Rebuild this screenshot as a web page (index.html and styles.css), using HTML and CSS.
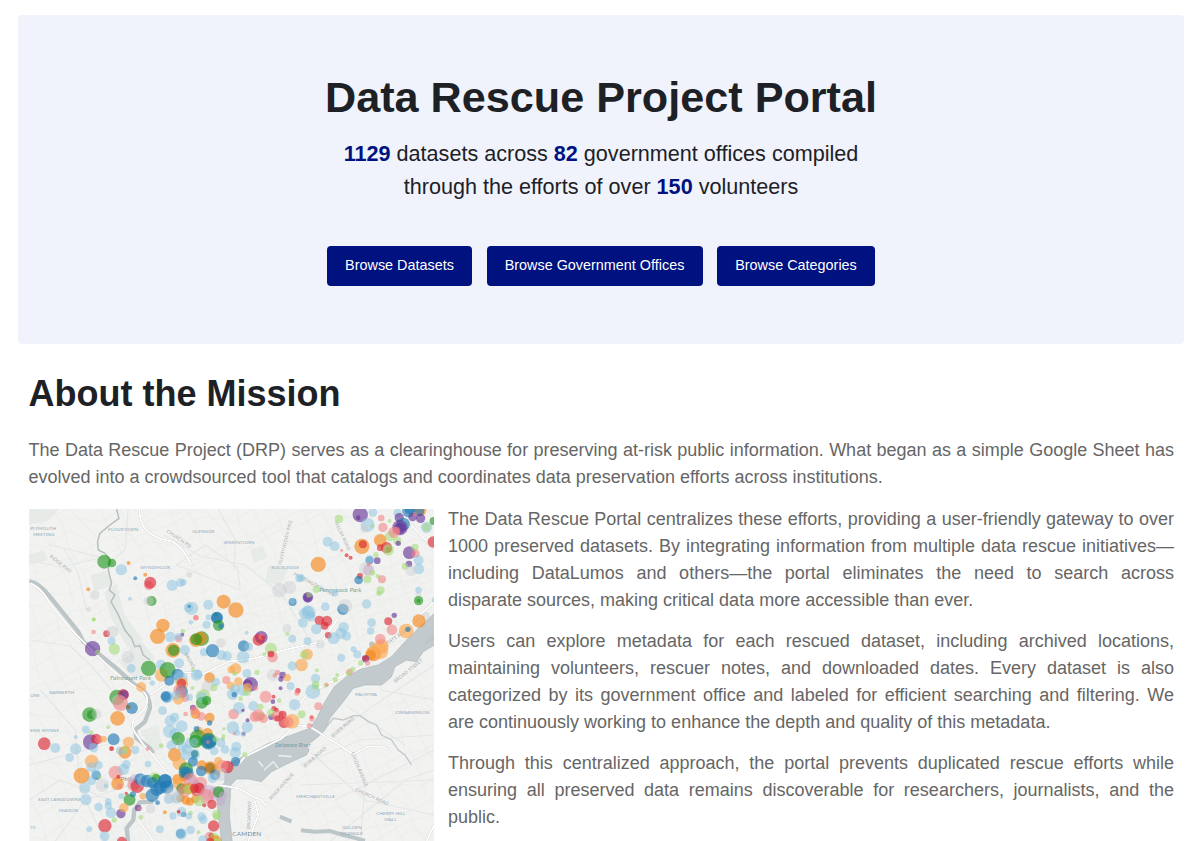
FILE: index.html
```html
<!DOCTYPE html>
<html lang="en">
<head>
<meta charset="utf-8">
<title>Data Rescue Project Portal</title>
<link rel="stylesheet" href="styles.css">
</head>
<body>
<header class="hero">
  <h1 class="hero-title">Data Rescue Project Portal</h1>
  <p class="hero-lead"><strong>1129</strong> datasets across <strong>82</strong> government offices compiled<br>through the efforts of over <strong>150</strong> volunteers</p>
  <nav class="actions">
    <a class="button datasets">Browse Datasets</a>
    <a class="button offices">Browse Government Offices</a>
    <a class="button categories">Browse Categories</a>
  </nav>
</header>
<main class="mission">
  <h2 class="mission-title">About the Mission</h2>
  <p class="copy">The Data Rescue Project (DRP) serves as a clearinghouse for preserving at-risk public information. What began as a simple Google Sheet has evolved into a crowdsourced tool that catalogs and coordinates data preservation efforts across institutions.</p>
  <div class="columns">
    <svg class="map" viewBox="29 509 405 332" role="img" aria-label="Map of the Philadelphia area">
      <defs>
        <pattern id="streets" width="61" height="53" patternUnits="userSpaceOnUse" patternTransform="rotate(-24)">
          <path d="M0 5L20 9 61 5M0 19L37 15 61 19M8 0V31L4 53M23 0L26 31 23 53M8 11H24M25 25H37L61 40M0 42L30 36 45 53M45 0L41 20 52 53" class="street"/>
        </pattern>
        <pattern id="blocks" width="7" height="6" patternUnits="userSpaceOnUse" patternTransform="rotate(-14)">
          <path d="M0 2H7M3 0V6" class="block"/>
        </pattern>
      </defs>
      <rect x="29" y="509" width="405" height="332" fill="#f2f3f1"/>
      <path d="M29 509h30l-12 12-18 4zM90 575l16-4 6 15-18 5zM104 592l12-8 8 30 18 25-15 8-17-30zM250 550l12-5 6 12-14 6zM28 555l15-5 5 10-19 5zM268 565l20 4-8 17-15-5zM120 615l17 22 18 20-6 15-18-14zM117 660l20-6 12 20-15 5zM140 730l18-4 4 22-10 5z" fill="#e7ebe8"/>
      <rect x="29" y="509" width="405" height="332" fill="url(#streets)"/>
      <path d="M165 600L300 590 400 560 434 560 434 610 350 665 310 710 235 760 222 841H100L110 740 150 730z" fill="url(#blocks)"/>
      <g class="road">
        <path d="M29 560L60 567 100 558M64 549L78 573 86 610M128 509L125 550 112 560 50 545M164 535L200 556 245 565 282 595 310 640M218 509L235 540 234 570M176 565L205 545 237 567 240 590 215 580zM29 640L70 646 90 665 120 700M40 690L75 730 80 790 105 841M29 765L85 750 145 735M29 800L60 780 110 800M55 841L85 800 130 785M300 785L434 780M310 752L365 800 434 815M350 752L365 785 360 841M330 841L405 780 434 770M300 765L360 740 434 735M335 800L434 750M380 690L434 700M330 735L434 665M345 705L405 745"/>
      </g>
      <g transform="translate(28 505) scale(.33333)">
        <path class="river" d="M1222 322L1175 365 1130 410 1090 455 1050 480 1000 492 955 515 918 545 890 590 865 640 845 670 790 690 720 715 655 750 600 775 590 800 590 830 565 870 570 930 580 1010 612 1010 603 930 608 840 625 822 660 822 700 830 730 800 790 770 835 750 843 735 835 722 870 695 890 675 905 640 945 590 975 550 1010 540 1060 540 1090 515 1100 485 1135 465 1165 470 1185 440 1222 418z"/>
        <path class="inlet" d="M893 668L915 640 945 645 975 632 995 632 1020 650 1045 660 1060 690 1090 705 1110 735 1130 750 1150 780"/>
        <path class="schuylkill" d="M3 228Q35 235 65 275L150 380 165 410 215 450 265 490 320 540Q365 560 365 610L350 650 320 675 325 700 365 730 375 745"/>
        <path class="schuylkill" d="M375 890L335 892 318 915 315 945 295 970 300 1008"/>
        <path class="highway" d="M3 235Q35 242 65 295L125 370 195 440 262 505 320 545Q357 560 357 585T330 630 318 680L345 718 370 745 410 795 440 835M333 12Q335 65 365 85T435 110Q470 135 490 182M630 780L650 755 760 700 805 660 845 665 940 725 975 748 1020 725 1060 725 1080 735M815 640L805 610 835 570 890 540 1010 480 1090 410 1218 290M1148 60L1218 130M570 840L630 850 675 875 700 885 715 905M678 882L690 930 660 1008M410 540L365 570M440 500L530 505 600 470 680 460 790 430 880 410 930 340M330 945L375 1008M1218 960L1195 1008"/>
        <path class="creek" d="M265 12L272 40 245 60 215 85 208 110 210 135 230 145 245 165 240 195 250 235 243 255 260 270 248 290 268 325 290 375 310 400 320 425 335 422 345 450 365 465"/>
        <path class="pier" d="M708 795L735 770 750 790M690 768L705 785M750 752L790 755"/>
        <path class="basin" d="M818 976L860 980 905 978 945 990 985 1000 1010 1008M755 935L790 950M1190 415L1218 395"/>
      </g>
      <g class="labels">
        <text x="30" y="530">PLYMOUTH</text><text x="33" y="536">MEETING</text>
        <text x="108" y="531">FLOURTOWN</text><text x="140" y="569">WYNDMOOR</text>
        <text x="192" y="533">GLENSIDE</text><text x="223" y="544">JENKINTOWN</text><text x="271" y="569">ROCKLEDGE</text>
        <text x="49" y="694">NARBERTH</text><text x="30" y="697">ORE</text><text x="30" y="732">ENN WYNNE</text>
        <text x="38" y="801">EAST LANSDOWNE</text><text x="58" y="812">YEADON</text><text x="30" y="829">TS</text>
        <text x="355" y="696">PALMYRA</text><text x="395" y="714">CINNAMINSON</text>
        <text x="296" y="798">MERCHANTVILLE</text><text x="376" y="815">CHERRY HILL</text><text x="384" y="821">MALL</text>
        <text x="342" y="829">GOLDEN</text><text x="340" y="835">TRIANGLE</text><text x="275" y="747" class="water">Delaware River</text>
        <text x="232" y="836" class="city">CAMDEN</text><text x="120" y="781" class="city">Phila</text>
        <text x="319" y="592" class="park">Pennypack Park</text><text x="110" y="680" class="park">Fairmount Park</text>
      </g>
      <g class="roads-text">
        <text transform="translate(49 557) rotate(38)">RIDGE PIKE</text><text transform="translate(166 532) rotate(34)">CHURCH RD</text>
        <text transform="translate(281 565) rotate(-76)">HUNTINGDON PIKE</text><text transform="translate(334 522) rotate(65)">WELSH ROAD</text>
        <text transform="translate(386 646) rotate(-35)">STATE ROAD</text><text transform="translate(395 683) rotate(-38)">BROAD STREET</text>
        <text transform="translate(351 753) rotate(68)">UNION AVENUE</text><text transform="translate(355 791) rotate(24)">CHURCH ROAD</text>
        <text transform="translate(271 800) rotate(-48)">RIVER AVENUE</text><text transform="translate(250 829) rotate(-88)">BROADWAY</text>
        <text transform="translate(305 768) rotate(-42)">RIVER ROAD</text><text transform="translate(333 738) rotate(-42)">RIVER ROAD</text><text transform="translate(184 654) rotate(60)">BROAD</text>
        <text transform="translate(293 575) rotate(28)">HUNTINGDON PIKE</text>
      </g>
      <g id="points"></g>
    </svg>
    <div class="story">
      <p class="copy">The Data Rescue Portal centralizes these efforts, providing a user-friendly gateway to over 1000 preserved datasets. By integrating information from multiple data rescue initiatives—including DataLumos and others—the portal eliminates the need to search across disparate sources, making critical data more accessible than ever.</p>
      <p class="copy">Users can explore metadata for each rescued dataset, including archived locations, maintaining volunteers, rescuer notes, and downloaded dates. Every dataset is also categorized by its government office and labeled for efficient searching and filtering. We are continuously working to enhance the depth and quality of this metadata.</p>
      <p class="copy">Through this centralized approach, the portal prevents duplicated rescue efforts while ensuring all preserved data remains discoverable for researchers, journalists, and the public.</p>
    </div>
  </div>
</main>
<script src="points.js"></script>
</body>
</html>
```

FILE: styles.css
```css
body {
  margin: 0;
  height: 841px;
  overflow: hidden;
  background: #fff;
  font-family: "Liberation Sans", Arial, sans-serif;
  color: #1d2125;
}
.hero {
  box-sizing: border-box;
  height: 329px;
  margin: 15px 13px 0 18px;
  padding-top: 55px;
  border-radius: 4px;
  background: #f0f3fc;
  text-align: center;
}
.hero-title {
  margin: 0;
  font-size: 43.2px;
  line-height: 54px;
}
.hero-lead {
  margin: 13px 0 0;
  font-size: 21.6px;
  line-height: 33px;
}
.hero-lead strong { color: #001180; }
.actions {
  display: flex;
  justify-content: center;
  gap: 14.5px;
  margin-top: 43px;
}
.button {
  box-sizing: border-box;
  height: 40px;
  border-radius: 4px;
  background: #001180;
  color: #fff;
  font-size: 14.4px;
  line-height: 38px;
  white-space: nowrap;
}
.datasets { width: 145px; }
.offices { width: 216px; }
.categories { width: 158px; }
.mission { padding: 28px 23px 0 28.5px; }
.mission-title {
  margin: 0;
  font-size: 36px;
  line-height: 43px;
}
.copy {
  margin: 0 0 14px;
  color: #666;
  font-size: 18px;
  line-height: 27px;
  text-align: justify;
}
.mission > .copy { margin-top: 22px; }
.columns {
  display: flex;
  align-items: flex-start;
  gap: 14px;
}
.map {
  display: block;
  flex: none;
  width: 405.5px;
  height: 332px;
  margin-top: 4px;
}
.story { flex: 1; }
.story .copy:first-child { margin-top: 1px; }
.street { fill: none; stroke: #e8eae8; stroke-width: .7; }
.block { fill: none; stroke: #eaecea; stroke-width: .6; }
.road { fill: none; stroke: #e5e7e6; stroke-width: 1.2; }
.river { fill: #c2cacd; stroke: #adb7ba; stroke-width: 2; }
.inlet { fill: none; stroke: #c0c8ca; stroke-width: 4; }
.creek { fill: none; stroke: #b5bfbf; stroke-width: 4.5; }
.schuylkill { fill: none; stroke: #bcc5c7; stroke-width: 13; }
.basin { fill: none; stroke: #bcc5c8; stroke-width: 12; }
.highway { fill: none; stroke: #fff; stroke-width: 6; filter: drop-shadow(0 0 1.5px #999); }
.pier { fill: none; stroke: #e8ebeb; stroke-width: 5; }
.labels { font-family: Lato, sans-serif; font-size: 4.6px; letter-spacing: .1px; fill: #91a8bb; }
.labels .park { font-size: 6px; font-style: italic; fill: #77a397; letter-spacing: .2px; }
.labels .water { font-size: 5px; font-style: italic; fill: #6995a4; letter-spacing: .3px; }
.labels .city { font-size: 6.4px; fill: #708b9d; letter-spacing: .2px; }
.roads-text { font-family: Lato, sans-serif; font-size: 4.6px; letter-spacing: .2px; fill: #a6a9aa; }
```

FILE: points.js
```
const colors = {
  b: "#8dc3e0", B: "#1f78b4", g: "#a2da76", G: "#229620", p: "#f58182", R: "#dc2530",
  o: "#fba850", O: "#f58518", v: "#c5a6ce", P: "#653398", y: "#c9cacf", n: "#8f691d"
};
const opacity = { b: .52, g: .57, p: .57, y: .42, v: .5, o: .65 };

// Each tile: origin x, origin y, then points as colour, x, y, radius in thirds of a map unit.
const tiles = [
  [28, 505, "G228 170 21 G251 174 13 b279 194 17 O301 174 6 B321 220 6 O351 209 6 p361 241 14 R366 233 18 G370 288 15 y361 288 15 O180 253 6 y200 270 14 b305 281 6 g197 343 6 y181 313 7"],
  [164, 505, "b24 241 17 b49 233 13 b57 232 10 y75 209 9 b82 310 20 b73 308 14 B75 304 5 b132 299 15 O178 290 21 O215 315 23 B158 338 18 G155 329 6 p95 338 8 b133 337 9 b405 220 12 y346 256 22 y376 247 20 B385 291 12 b384 288 9 b430 317 16 P430 278 13"],
  [300, 505, "P180 29 23 P174 38 7 b218 22 13 g116 42 13 b202 60 21 y192 72 12 g216 63 6 p243 39 10 p248 67 14 g268 48 6 b292 24 13 P297 38 14 B325 18 19 B309 58 20 P299 68 23 P299 70 17 p288 77 12 B328 14 14 P337 36 13 O360 16 18 B356 18 16 p344 28 6 P361 40 14 b379 67 17 g379 67 12 G400 48 12 b82 110 15 b103 124 15 O185 124 23 R188 118 12 p124 136 5 R139 151 6 R151 158 6 O240 106 19 R240 128 10 R259 128 17 n265 134 9 g269 94 15 g264 135 17 p281 82 17 g291 107 12 P294 115 8 P327 143 19 g344 127 11 p346 146 12 R399 111 17 O54 178 23 B208 166 12 b208 163 13 g227 149 8 P231 167 10 b355 166 15 b356 192 16 P326 177 10 g314 184 10 y332 197 16 y196 191 20 v205 195 17 p205 178 6 g216 203 9 R179 213 9 B175 225 13 g201 223 12 p245 223 12 g233 214 7 b3 219 11 g48 253 11 b104 265 10 P23 277 16 g26 270 8 g241 256 12 g236 265 8 b355 255 10 y354 268 9 G355 287 14 G355 287 6 b75 305 13 b199 297 14 B128 313 17 y135 303 21 b25 323 21 b34 329 10 P282 331 8 y377 334 13 b402 285 8"],
  [28, 615, "p196 51 7 g196 14 6 R235 56 10 y253 50 18 b250 78 12 P193 101 23 g207 111 7 g258 102 17 y299 126 19 b309 160 13 G361 160 23 O388 64 23 O404 31 20 b398 149 15 o400 180 20 o339 216 15 b372 204 8 G266 247 23 R285 239 17 P287 239 14 y272 260 22 p277 265 23 B311 279 18 n300 276 7 G184 299 22 G189 299 13 y205 297 15 O268 310 22 b173 344 12 g240 337 6 b403 287 13 B415 247 16"],
  [164, 615, "B158 8 17 G163 31 17 B170 33 8 p95 8 8 b127 29 12 b80 22 7 g56 49 7 P54 59 6 p43 71 11 b18 66 16 b43 65 11 O26 106 22 G28 106 17 b62 105 15 O95 76 20 G112 71 22 O108 70 20 G96 73 18 b119 112 12 B145 107 20 b172 121 15 b189 123 14 y170 84 14 B238 93 17 b253 95 13 b237 126 19 b247 53 6 P291 67 19 R283 74 18 p291 65 9 R297 67 6 g320 101 18 p325 126 16 R320 117 10 g300 118 6 b384 71 12 g369 57 6 y368 40 13 b416 23 15 o412 150 19 G10 165 24 b45 145 15 B15 197 15 B40 179 18 b49 190 21 o53 206 19 R52 205 14 g86 164 6 b97 180 17 b102 178 13 O136 188 16 o201 164 11 o214 161 17 p186 195 12 g211 176 7 b248 175 13 o199 212 12 o222 200 13 P259 208 22 P250 207 14 g278 172 8 p275 220 7 y325 180 18 p340 172 8 p332 181 7 P355 180 10 P350 192 8 P349 220 6 o369 188 11 b379 213 12 R401 227 8 p398 234 8 b384 153 14 B52 230 19 b10 245 18 B4 244 15 p45 226 18 p62 248 13 o42 253 16 b35 241 14 b75 247 11 g85 219 6 y130 214 18 b155 201 13 g149 218 10 b205 238 17 b212 223 15 B210 239 8 b237 225 18 g248 230 13 o250 217 13 p304 245 18 g289 275 9 R328 245 6 P326 260 7 g345 257 7 g117 245 22 G113 263 18 b113 247 17 G127 257 14 P86 278 9 p64 297 7 b31 307 14 b18 317 17 b52 334 18 O94 297 15 p111 304 13 p90 286 13 O136 308 15 B136 324 8 p208 297 16 b224 279 18 b267 273 15 g229 251 7 P236 286 5 b206 338 19 b249 336 17 P250 316 6 p272 305 16 g290 303 13 p282 301 18 p297 310 14 R329 281 8 R337 285 7 P321 306 9 g321 293 12 p340 303 18 R355 299 12 R359 323 16 R339 310 9 o383 319 22 p371 321 17 g412 298 12 b391 269 17"],
  [300, 615, "R57 16 14 R80 18 16 R73 32 12 b48 42 16 b31 5 15 b12 -5 16 R84 61 10 b100 70 18 b130 37 16 b122 55 17 b139 63 14 b214 23 13 b211 48 11 R264 19 12 p275 44 16 O356 18 20 o318 48 22 B323 43 8 b22 79 12 y60 88 13 b123 128 12 O220 116 23 o240 108 24 o243 94 22 p240 72 16 O211 120 16 o216 90 9 b214 87 8 P196 131 11 R194 130 8 p202 144 8 b160 103 9 b171 118 12 o21 118 17 g12 119 13 g50 166 6 g111 180 6 g105 194 8 p148 171 10 g157 163 8 g181 144 8 g145 175 8 g76 211 7 p80 209 6 b46 190 14 g46 208 11 b38 230 22 g46 217 9 p54 274 12 R34 307 6 p35 312 8 p28 332 8"],
  [28, 726, "R48 53 19 b81 66 15 b142 69 17 b124 95 13 P187 48 23 R204 39 16 p211 41 12 o226 39 10 B256 40 18 b142 33 6 g189 20 7 b196 65 14 o301 49 17 b320 72 13 b275 74 12 p250 68 7 R250 68 7 O290 79 19 g289 72 11 b282 78 9 p358 69 6 g399 59 7 o190 106 20 b211 117 13 b189 124 15 O160 149 24 B204 148 14 b203 141 13 g214 153 6 b190 164 14 y222 178 20 b170 186 17 b173 221 17 b211 243 13 b240 227 10 b240 239 11 b248 260 16 b233 180 7 p262 140 21 O268 173 19 b294 115 13 b286 130 17 R270 152 6 p275 180 8 p315 177 18 v323 166 22 R327 181 20 B336 160 18 b344 164 18 B357 165 19 g379 156 17 G384 157 13 G304 221 18 B314 205 9 b279 211 9 R294 202 5 o344 211 10 B372 208 20 B396 184 20 B410 165 21 B388 230 7 O410 259 6 P330 246 10 p333 247 6 P278 263 14 o287 245 14 y367 249 14 g338 274 7 g258 282 8 R230 299 20 b183 310 9 b229 331 15 R281 347 15 b395 310 12 b359 114 10"],
  [164, 726, "b16 16 20 b32 24 17 G42 38 20 b22 58 15 b67 70 15 b55 62 15 b81 50 18 o104 14 12 B97 9 9 G101 35 24 G95 46 20 O130 22 16 G133 44 24 B133 47 24 B136 48 18 p131 48 6 b90 48 13 b90 85 17 g92 83 11 B91 84 11 O31 86 20 o45 112 20 b62 88 15 B86 107 15 b213 80 17 b216 62 15 B214 107 14 R189 123 19 p174 120 19 o162 105 12 o154 132 16 O138 126 20 n137 125 15 O113 118 15 B152 146 16 b145 156 15 B111 135 16 y169 145 20 g178 30 6 g179 8 5 b169 50 14 g176 38 6 b219 20 9 p210 23 5 P238 23 6 b237 24 8 g242 86 8 g154 40 9 b150 75 13 b182 70 13 O40 160 16 o45 172 19 O60 151 15 G65 130 21 B61 139 18 B69 142 19 B3 165 20 B8 183 20 B-22 190 20 B-35 170 17 R100 189 22 p78 162 21 p109 171 19 y107 187 23 v86 171 18 G52 188 16 p59 194 20 O73 188 17 g71 190 14 R91 187 14 R105 186 16 v134 201 24 v154 203 22 p126 211 22 G163 198 17 v170 227 13 v176 209 12 O65 223 13 O77 227 12 O48 216 13 O93 219 13 g104 225 16 b38 216 17 b14 219 15 y25 208 22 R143 235 14 R120 238 6 g157 265 13 B58 265 8 g79 261 7 b74 271 10 b52 258 15 b26 270 11 p44 258 6 R43 257 5 b112 272 13 b117 281 13 g156 272 10 R148 300 17 B49 323 14 b51 324 17 b79 312 13 g103 319 6 p136 331 14 R141 329 8 g150 334 14 O153 348 20 g158 351 15 b116 342 14 R138 347 12"]
];

const group = document.getElementById("points");
for (const [left, top, list] of tiles) {
  for (const match of list.matchAll(/([a-zA-Z])(-?\d+) (-?\d+) (\d+)/g)) {
    const dot = document.createElementNS("http://www.w3.org/2000/svg", "circle");
    dot.setAttribute("cx", left + match[2] / 3);
    dot.setAttribute("cy", top + match[3] / 3);
    dot.setAttribute("r", match[4] / 3);
    dot.setAttribute("fill", colors[match[1]]);
    dot.setAttribute("fill-opacity", opacity[match[1]] || .63);
    group.appendChild(dot);
  }
}
```
